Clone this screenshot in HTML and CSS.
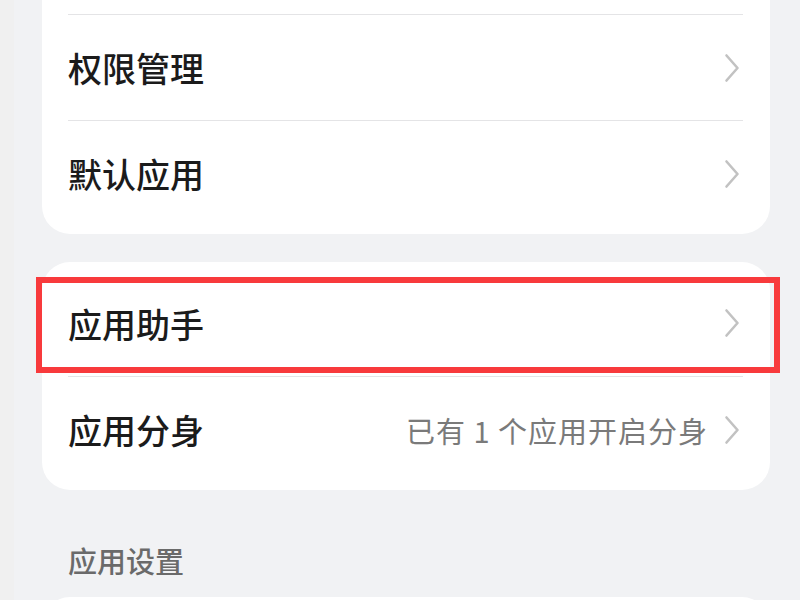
FILE: index.html
```html
<!DOCTYPE html>
<html lang="zh-CN">
<head>
<meta charset="utf-8">
<title>应用</title>
<link rel="stylesheet" href="styles.css">
</head>
<body>
<div class="page">
  <section class="card">
    <div class="row row-spacer"></div>
    <div class="row">
      <span class="label">权限管理</span>
      <span class="trail">
        <svg class="chev" viewBox="0 0 16 30" width="16" height="30"><path d="M2.5 2.5 L13.5 15 L2.5 27.5" fill="none" stroke="#c2c2c2" stroke-width="2.6" stroke-linecap="round" stroke-linejoin="round"/></svg>
      </span>
    </div>
    <div class="row">
      <span class="label">默认应用</span>
      <span class="trail">
        <svg class="chev" viewBox="0 0 16 30" width="16" height="30"><path d="M2.5 2.5 L13.5 15 L2.5 27.5" fill="none" stroke="#c2c2c2" stroke-width="2.6" stroke-linecap="round" stroke-linejoin="round"/></svg>
      </span>
    </div>
  </section>

  <section class="card card-marked">
    <div class="row">
      <span class="label">应用助手</span>
      <span class="trail">
        <svg class="chev" viewBox="0 0 16 30" width="16" height="30"><path d="M2.5 2.5 L13.5 15 L2.5 27.5" fill="none" stroke="#c2c2c2" stroke-width="2.6" stroke-linecap="round" stroke-linejoin="round"/></svg>
      </span>
    </div>
    <div class="row">
      <span class="label">应用分身</span>
      <span class="trail">
        <span class="value">已有 1 个应用开启分身</span>
        <svg class="chev" viewBox="0 0 16 30" width="16" height="30"><path d="M2.5 2.5 L13.5 15 L2.5 27.5" fill="none" stroke="#c2c2c2" stroke-width="2.6" stroke-linecap="round" stroke-linejoin="round"/></svg>
      </span>
    </div>
    <div class="highlight"></div>
  </section>

  <h2 class="section-title">应用设置</h2>

  <section class="card card-last">
    <div class="row row-spacer"></div>
  </section>
</div>
</body>
</html>
```

FILE: styles.css
```css
html, body {
  margin: 0;
  padding: 0;
}

body {
  width: 800px;
  height: 600px;
  overflow: hidden;
  background: linear-gradient(to right, #f0f0f0 0, #f0f0f0 14px, #f1f2f4 14px, #f1f2f4 100%);
  font-family: "Noto Sans CJK SC", "Noto Sans", sans-serif;
}

.page {
  margin-top: -99px;
  padding: 0 30px 0 42px;
  display: flex;
  flex-direction: column;
}

.card {
  position: relative;
  background: #ffffff;
  border-radius: 28px;
  padding: 8px 27px 8px 26px;
}

.card + .card {
  margin-top: 28px;
}

.row {
  height: 106px;
  box-sizing: border-box;
  display: flex;
  align-items: center;
  justify-content: space-between;
}

.row + .row {
  border-top: 1px solid #e4e4e6;
}

.row-spacer {
  height: 105px;
}

.label {
  font-size: 34px;
  font-weight: 500;
  color: #1b1b1b;
}

.trail {
  display: flex;
  align-items: center;
  gap: 16px;
  padding-right: 3px;
}

.value {
  font-size: 29px;
  color: #7a7a7a;
  letter-spacing: 1px;
}

.chev {
  display: block;
}

.highlight {
  position: absolute;
  left: -6px;
  top: 15px;
  width: 744px;
  height: 96px;
  box-sizing: border-box;
  border: 6px solid #f83a3c;
}

.section-title {
  margin: 50px 0 17px 26px;
  font-size: 29px;
  line-height: 40px;
  font-weight: 500;
  color: #6a6a6a;
}

.card-last {
  flex-shrink: 0;
}
```
